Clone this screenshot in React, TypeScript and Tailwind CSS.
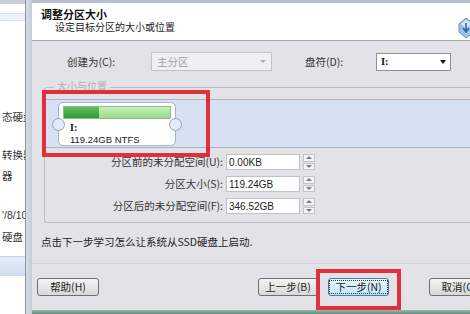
import React from "react";

const font = { fontFamily: '"Noto Sans CJK SC", "Liberation Sans", sans-serif' };

function Spinner() {
  return (
    <div className="ml-[3px] w-[12px] h-[16px] shrink-0 flex flex-col gap-[1px]">
      <div className="flex-1 border border-[#c4c4c8] bg-[#f4f4f6] flex items-center justify-center">
        <div className="w-0 h-0 border-l-[3px] border-r-[3px] border-b-[3px] border-l-transparent border-r-transparent border-b-[#7a7a80]" />
      </div>
      <div className="flex-1 border border-[#c4c4c8] bg-[#f4f4f6] flex items-center justify-center">
        <div className="w-0 h-0 border-l-[3px] border-r-[3px] border-t-[3px] border-l-transparent border-r-transparent border-t-[#7a7a80]" />
      </div>
    </div>
  );
}

function FieldRow({ label, value }: { label: string; value: string }) {
  return (
    <div className="flex items-center h-[16px]">
      <div className="w-[181px] shrink-0 text-right pr-[3px] text-[10.5px] text-[#333] whitespace-nowrap leading-[14px]">{label}</div>
      <div className="w-[74px] shrink-0 h-[16px] bg-white border border-[#bfc3c9] text-[10px] text-[#222] flex items-center pl-[2px]" style={{ fontFamily: '"Liberation Sans", sans-serif' }}>
        {value}
      </div>
      <Spinner />
    </div>
  );
}

function Btn({ label, focused, w }: { label: string; focused?: boolean; w: number }) {
  return (
    <div
      className={
        "h-[18px] shrink-0 rounded-[3px] border flex items-center justify-center text-[10.5px] text-[#222] whitespace-nowrap leading-[12px] " +
        (focused
          ? "border-[#3c7fb1] bg-gradient-to-b from-[#eaf6fd] to-[#bee6fd]"
          : "border-[#707070] bg-gradient-to-b from-[#f4f4f4] to-[#d8d8d8]")
      }
      style={{ width: w }}
    >
      {focused ? (
        <div className="border border-dotted border-[#333] px-[5px] leading-[12px] whitespace-nowrap">{label}</div>
      ) : (
        label
      )}
    </div>
  );
}

export default function App() {
  return (
    <div className="relative w-[470px] h-[314px] overflow-hidden flex bg-white" style={font}>
      {/* background window strip */}
      <div className="w-[25px] shrink-0 h-full flex flex-col overflow-hidden bg-white text-[10.5px] text-[#333] whitespace-nowrap">
        <div className="h-[4px] shrink-0 bg-[#c9ced6]" />
        <div className="h-[9px] shrink-0" />
        <div className="h-[1px] shrink-0 bg-[#dde3ea]" />
        <div className="h-[6px] shrink-0 bg-[#eef3f9]" />
        <div className="h-[1px] shrink-0 bg-[#dde3ea]" />
        <div className="h-[89px] shrink-0" />
        <div className="pl-[2px] leading-[14px] shrink-0">态硬盘</div>
        <div className="h-[24px] shrink-0" />
        <div className="pl-[2px] leading-[14px] shrink-0">转换器</div>
        <div className="h-[7px] shrink-0" />
        <div className="pl-[2px] leading-[14px] shrink-0">器</div>
        <div className="h-[25px] shrink-0" />
        <div className="pl-[2px] leading-[14px] shrink-0" style={{ fontFamily: '"Liberation Sans", sans-serif' }}>'/8/10</div>
        <div className="h-[8px] shrink-0" />
        <div className="pl-[2px] leading-[14px] shrink-0">硬盘</div>
        <div className="h-[12px] shrink-0" />
        <div className="h-[20px] shrink-0 bg-gradient-to-b from-[#e6eefa] to-[#cfdcf0] border-t border-[#c4d2e6]" />
      </div>

      {/* dialog frame */}
      <div className="w-[7px] shrink-0 h-full border-l border-[#8d97a4] bg-gradient-to-r from-[#d4dde8] to-[#c3ccd8]" />

      {/* dialog content */}
      <div className="flex-1 min-w-0 h-full flex flex-col bg-[#e3e3e7]">
        <div className="h-[3px] shrink-0 bg-[#b7bfca]" />
        {/* header */}
        <div className="h-[38px] shrink-0 bg-white border-b border-[#a5a9b0] flex relative">
          <div className="pl-[9px] pt-[4px] flex flex-col">
            <div className="text-[11px] font-bold text-[#111] leading-[14px] whitespace-nowrap">调整分区大小</div>
            <div className="pl-[14px] text-[10px] text-[#222] leading-[12px] whitespace-nowrap">设定目标分区的大小或位置</div>
          </div>
          <div className="absolute right-[-6px] top-[11px]">
            <svg width="20" height="26" viewBox="0 0 20 26">
              <path d="M3 10 L10 4 L18 10 L18 18 L10 24 L3 18 Z" fill="#9fc3e6" stroke="#6a8fb8" strokeWidth="1" />
              <path d="M5 10 L10 6 L16 10 L10 14 Z" fill="#d9ebf9" />
              <path d="M10 9 L10 17 M7 14 L10 18 L13 14" stroke="#2a66b0" strokeWidth="1.6" fill="none" />
            </svg>
          </div>
        </div>

        {/* create-as row */}
        <div className="flex items-center mt-[11px] h-[19px] shrink-0">
          <div className="w-[119px] shrink-0 pl-[35px] text-[10.5px] text-[#333] whitespace-nowrap">创建为(C):</div>
          <div className="w-[121px] shrink-0 h-[19px] border border-[#c2c4c8] bg-[#f0f0f2] flex items-center justify-between px-[5px] text-[10.5px] text-[#a0a0a4]">
            <span>主分区</span>
            <div className="w-0 h-0 border-l-[3px] border-r-[3px] border-t-[3px] border-l-transparent border-r-transparent border-t-[#b0b0b4]" />
          </div>
          <div className="w-[104px] shrink-0 pl-[33px] text-[10.5px] text-[#333] whitespace-nowrap">盘符(D):</div>
          <div className="w-[75px] shrink-0 h-[18px] border border-[#8e939a] bg-white flex items-center justify-between px-[4px] text-[10.5px] text-[#111]">
            <span className="font-bold" style={{ fontFamily: '"Liberation Serif", serif' }}>I:</span>
            <div className="w-0 h-0 border-l-[3.5px] border-r-[3.5px] border-t-[4px] border-l-transparent border-r-transparent border-t-[#111]" />
          </div>
        </div>

        {/* group box */}
        <div className="relative shrink-0 ml-[12px] mt-[16px] h-[136px] border-l border-t border-b border-[#bcbcc2] rounded-tl-[3px] rounded-bl-[3px]">
          <div className="absolute top-[-9px] left-[9px] px-[3px] bg-[#e3e3e7] text-[10px] text-[#b0b0b4] leading-[14px] whitespace-nowrap">大小与位置</div>
          {/* blue band */}
          <div className="mt-[11px] h-[49px] bg-[#d7e1f2] border-t border-b border-[#a7b3c7] flex items-center">
            <div className="relative ml-[13px] w-[118px] h-[44px] bg-white border border-[#a6b4ca] rounded-[5px]">
              <div className="absolute left-[4px] right-[4px] top-[3px] h-[13px] border border-[#9bb49b] flex">
                <div className="w-[35px] bg-gradient-to-b from-[#5cc25c] to-[#2e9a2e]" />
                <div className="flex-1 bg-gradient-to-b from-[#c4f0b8] to-[#96dc88]" />
              </div>
              <div className="absolute left-[11px] top-[19px] text-[10px] font-bold text-[#111] leading-[12px]" style={{ fontFamily: '"Liberation Serif", serif' }}>I:</div>
              <div className="absolute left-[11px] top-[31px] text-[9.5px] text-[#222] leading-[11px] whitespace-nowrap" style={{ fontFamily: '"Liberation Sans", sans-serif' }}>119.24GB NTFS</div>
              <div className="absolute left-[-7px] top-[15px] w-[13px] h-[13px] rounded-full bg-[#e4ebf8] border border-[#8ea2c4]" />
              <div className="absolute right-[-7px] top-[15px] w-[13px] h-[13px] rounded-full bg-[#e4ebf8] border border-[#8ea2c4]" />
            </div>
          </div>
          {/* fields */}
          <div className="mt-[6px] flex flex-col gap-[6px]">
            <FieldRow label="分区前的未分配空间(U):" value="0.00KB" />
            <FieldRow label="分区大小(S):" value="119.24GB" />
            <FieldRow label="分区后的未分配空间(F):" value="346.52GB" />
          </div>
        </div>

        {/* hint */}
        <div className="mt-[12px] pl-[9px] text-[10.5px] text-[#222] leading-[14px] whitespace-nowrap shrink-0">点击下一步学习怎么让系统从SSD硬盘上启动.</div>

        <div className="mt-[14px] h-[1px] bg-[#cfcfd4] shrink-0" />

        {/* buttons */}
        <div className="mt-[14px] flex items-center pl-[5px] shrink-0">
          <Btn label="帮助(H)" w={62} />
          <div className="w-[159px] shrink-0" />
          <Btn label="上一步(B)" w={60} />
          <div className="w-[10px] shrink-0" />
          <Btn label="下一步(N)" focused w={61} />
          <div className="w-[40px] shrink-0" />
          <Btn label="取消(C)" w={60} />
        </div>
        <div className="flex-1" />
        <div className="h-[4px] shrink-0 bg-gradient-to-b from-[#9db8a8] to-[#5f8f7a]" />
      </div>

      {/* red highlights */}
      <div className="absolute left-[42px] top-[90px] w-[168px] h-[67px] border-[4px] border-[#e0303c]" />
      <div className="absolute left-[316px] top-[269px] w-[85px] h-[41px] border-[4px] border-[#e0303c]" />
    </div>
  );
}
